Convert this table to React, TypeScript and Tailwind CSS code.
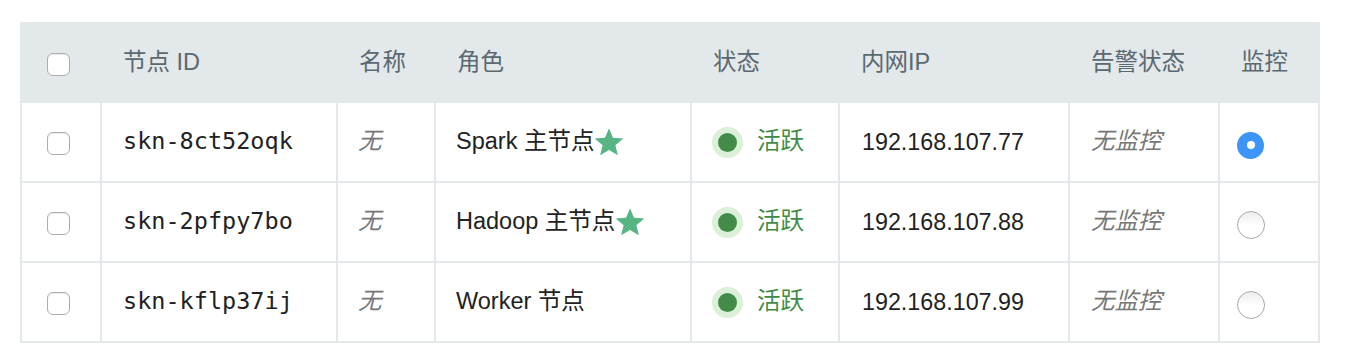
const columns = [
  { key: 'check', label: '', width: 'w-[80px]' },
  { key: 'id', label: '节点 ID', width: 'w-[236px]' },
  { key: 'name', label: '名称', width: 'w-[98px]' },
  { key: 'role', label: '角色', width: 'w-[256px]' },
  { key: 'status', label: '状态', width: 'w-[148px]' },
  { key: 'ip', label: '内网IP', width: 'w-[230px]' },
  { key: 'alert', label: '告警状态', width: 'w-[150px]' },
  { key: 'monitor', label: '监控', width: 'w-[100px]' },
];

const nodes = [
  { id: 'skn-8ct52oqk', role: 'Spark 主节点', master: true, ip: '192.168.107.77', monitored: true },
  { id: 'skn-2pfpy7bo', role: 'Hadoop 主节点', master: true, ip: '192.168.107.88', monitored: false },
  { id: 'skn-kflp37ij', role: 'Worker 节点', master: false, ip: '192.168.107.99', monitored: false },
];

const Checkbox = () => (
  <span className="block h-[23px] w-[23px] rounded-[6px] border border-[#acacac] bg-white shadow-[inset_0_1px_1px_rgba(0,0,0,0.08)]" />
);

const Radio = ({ checked }: { checked: boolean }) =>
  checked ? (
    <span className="flex h-[27px] w-[27px] items-center justify-center rounded-full bg-[#3d95f7]">
      <span className="h-[8px] w-[8px] rounded-full bg-white" />
    </span>
  ) : (
    <span className="block h-[28px] w-[28px] rounded-full border border-[#a8a8a8] bg-gradient-to-b from-[#ececec] via-white to-white" />
  );

const Star = () => (
  <svg viewBox="0 0 24 24" className="h-[30px] w-[30px]">
    <path d="M12 1l3.2 7.6 8.2.6-6.3 5.4 2 8L12 18.4l-7.1 4.2 2-8L.6 9.2l8.2-.6z" fill="#57b583" />
  </svg>
);

export default function App() {
  return (
    <div className="min-h-[362px] bg-white pl-[20px] pt-[22px] font-['Liberation_Sans','Noto_Sans_CJK_SC',sans-serif]">
      <table className="table-fixed border-collapse text-[23.5px]">
        <thead>
          <tr className="bg-[#e3e8eb]">
            {columns.map((c) => (
              <th
                key={c.key}
                className={`${c.width} h-[79px] border-2 border-[#e3e8eb] pl-[21px] text-left align-middle font-normal text-[#5b6970]`}
              >
                {c.key === 'check' ? (
                  <span className="ml-[4px] mt-[4px] block">
                    <Checkbox />
                  </span>
                ) : (
                  c.label
                )}
              </th>
            ))}
          </tr>
        </thead>
        <tbody>
          {nodes.map((n) => (
            <tr key={n.id} className="text-[#222]">
              <td className="h-[80px] border-2 border-[#e3e8eb] pl-[25px] align-middle">
                <span className="mt-[2px] block">
                  <Checkbox />
                </span>
              </td>
              <td className="border-2 border-[#e3e8eb] pl-[21px] align-middle font-['DejaVu_Sans_Mono',monospace]">
                {n.id}
              </td>
              <td className="border-2 border-[#e3e8eb] pl-[20px] align-middle italic text-[#777]">无</td>
              <td className="border-2 border-[#e3e8eb] pl-[20px] align-middle">
                <span className="flex items-center">
                  {n.role}
                  {n.master && <Star />}
                </span>
              </td>
              <td className="border-2 border-[#e3e8eb] pl-[20px] align-middle">
                <span className="flex items-center gap-[14px] text-[#3f8b44]">
                  <span className="flex h-[31px] w-[31px] items-center justify-center rounded-full bg-[#dcefd7]">
                    <span className="h-[19px] w-[19px] rounded-full bg-[#448a48]" />
                  </span>
                  活跃
                </span>
              </td>
              <td className="border-2 border-[#e3e8eb] pl-[22px] align-middle text-[23.3px]">{n.ip}</td>
              <td className="border-2 border-[#e3e8eb] pl-[21px] align-middle italic text-[#777]">无监控</td>
              <td className="border-2 border-[#e3e8eb] pl-[17px] align-middle">
                <span className="mt-[6px] block">
                  <Radio checked={n.monitored} />
                </span>
              </td>
            </tr>
          ))}
        </tbody>
      </table>
    </div>
  );
}
